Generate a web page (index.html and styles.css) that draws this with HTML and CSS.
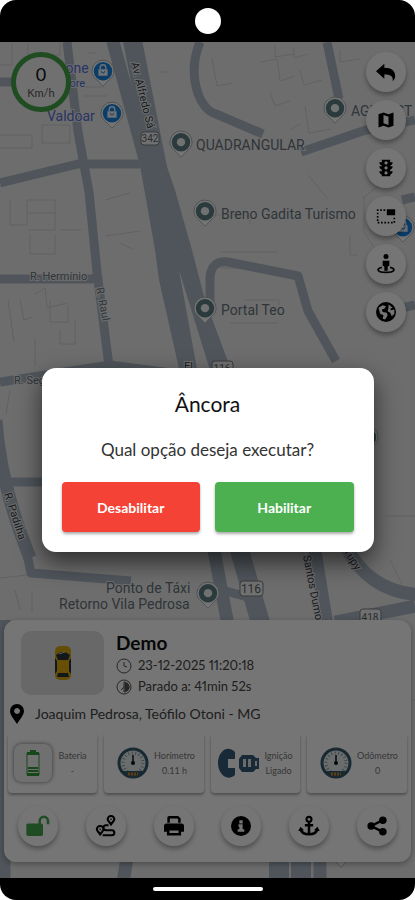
FILE: index.html
```
<!DOCTYPE html>
<html lang="pt-BR">
<head>
<meta charset="utf-8">
<meta name="viewport" content="width=device-width, initial-scale=1">
<title>Rastreamento</title>
<link rel="stylesheet" href="styles.css">
</head>
<body>
<svg class="defs" width="0" height="0" aria-hidden="true">
  <defs>
    <symbol id="pin" viewBox="0 0 26 30">
      <path d="M13 1a12 12 0 0 1 12 12c0 6-5 9-8 12-2 2-3 4-4 4s-2-2-4-4c-3-3-8-6-8-12A12 12 0 0 1 13 1z" fill="#fff" stroke="#a5adaf" stroke-width="1"/>
      <circle cx="13" cy="13" r="10" fill="#5f7f83"/><circle cx="13" cy="13" r="4.500" fill="#f4f8f8"/>
    </symbol>
    <symbol id="shop" viewBox="0 0 26 30">
      <path d="M13 1a12 12 0 0 1 12 12c0 6-5 9-8 12-2 2-3 4-4 4s-2-2-4-4c-3-3-8-6-8-12A12 12 0 0 1 13 1z" fill="#fff" stroke="#a5adaf" stroke-width="1"/>
      <circle cx="13" cy="13" r="10" fill="#1685e0"/>
      <path d="M8 11h10v7H8z" fill="#f4f8ff"/><path d="M10 11V9a3 3 0 0 1 6 0v2" fill="none" stroke="#f4f8ff" stroke-width="1.500"/><path d="M11 13a2 2 0 0 0 4 0" fill="none" stroke="#1685e0"/>
    </symbol>
    <symbol id="gauge" viewBox="0 0 32 32">
      <circle cx="16" cy="16" r="14" fill="#e8eded" stroke="#36596b" stroke-width="3"/>
      <circle cx="16" cy="16" r="10" fill="none" stroke="#8a9da4" stroke-width="3" stroke-dasharray="1 2.500"/>
      <path d="M5 24h22a14 14 0 0 1-22 0z" fill="#36596b"/>
      <path d="M16 8v8" stroke="#111" stroke-width="1.500"/><circle cx="16" cy="16" r="2" fill="#111"/>
      <path d="M11 27h10" stroke="#c68a28" stroke-width="3" stroke-dasharray="2 1"/>
    </symbol>
  </defs>
</svg>
<div class="phone">
  <header class="status"><span class="camera"></span></header>
  <main class="screen">
    <svg class="map" viewBox="0 42 415 836" preserveAspectRatio="xMidYMid slice" role="img" aria-label="Mapa">
      <rect y="42" width="415" height="836" fill="#f0eeef"/>
      <g class="blocks">
        <path d="M0 65h12v-22M28 43v12h32V43M84 96h23M80 87h24M88 53h8M0 135h32v13H0M42 125h28v18H42zM160 72h8M10 200v25h17v-25h28v30H28M27 213h28M30 234v20h25v-19M60 230h22M105 200l25-7M105 236l35-5M120 243l12 6M8 300l6 42M20 300l4 20 8-3M35 294l10-6 2 20 20-5M50 300v22h18v-17M75 320v25M35 338v28M60 330v14h16M10 390l-4 24M212 58l5 28 15-3M260 62l17-3 3 22 15-5M275 45v12l18-3M294 48v10l14-4M300 70l4 15 18-5M270 92l5 14 15-5M305 106l4 27 22-4M290 130l10-6M308 175l20 24M220 252h57M230 323h48M210 215h40v10M220 268h50M245 300h34v5M350 235v20h8M380 185l-16 12v35l20 30M340 50v12l20-3M370 70h15M385 516h30M390 560l12 24M0 689h8M15 590l5 20M32 592v20M0 578l28-3M408 700h7"/>
      </g>
      <g class="roads">
        <path class="r8" d="M67 42l11 90 11 60 8 80 12 94"/>
        <path class="r8" d="M0 82h18M0 183l78-19h62M0 279h92l9-4M0 382l52-8 58-9 92 12M0 482h45"/>
        <path class="r8" d="M200 42c-14 35 0 68 16 72l47 20M301 152l65-22 49-10"/>
        <path class="r8" d="M327 42l12 57M210 310v-32q1-18 18-16l70 14 10 35 28 50"/>
        <path class="r8" d="M402 200l13-3M402 308l13-3M24 540l7 33 100 8M222 590l36 10"/>
        <path class="r13" d="M-4 420q4 64 34 138"/>
        <path class="r13" d="M4 620v265M127 858l-4 25"/>
        <path class="r13" d="M112 38l34 125"/>
        <path class="r16" d="M132 38l26 132"/>
        <path class="area" d="M139 160l24-5 12 35 17 60 13 50 28 75-20 5-34-110 20 110-17 2-23-102-4-30z"/>
        <path class="r13" d="M213 545l15 80M314 545l13 80M345 545q25 50 82 50M335 622l80-16"/>
        <path class="r16" d="M238 545l26 90"/>
        <path class="r20" d="M279 855v25M301 855v25"/>
        <path class="r13" d="M320 855v25"/>
      </g>
      <g class="labels">
        <text class="shop" x="49" y="73">Ozone</text><text class="shop small" x="54" y="87">Valore</text><text class="shop" x="47" y="121">Valdoar</text>
        <text x="196" y="150">QUADRANGULAR</text><text x="351" y="116">AGROEST</text>
        <text x="221" y="219">Breno Gadita Turismo</text><text x="221" y="315">Portal Teo</text>
        <text x="106" y="593">Ponto de Táxi</text><text x="59" y="609">Retorno Vila Pedrosa</text>
        <text class="street" x="30" y="280">R. Hermínio</text><text class="street" x="14" y="384">R. Seg</text>
        <text class="street" transform="translate(96 288) rotate(79)">R. Raul</text>
        <text class="street dark" transform="translate(131 63) rotate(76)">Av. Alfredo Sá</text>
        <text class="street dark" transform="translate(4 494) rotate(72)">R. Padilha</text>
        <text class="street dark" transform="translate(303 556) rotate(79)">Santos Dumo</text>
        <text class="street dark" transform="translate(343 551) rotate(58)">Tupy</text>
        <text class="street dark" x="184" y="370">El</text>
      </g>
      <g class="shields">
        <rect x="141" y="132" width="18" height="13" rx="3"/><text x="150" y="142">342</text>
        <rect x="212" y="361" width="21" height="14" rx="3"/><text x="222" y="372">116</text>
        <rect x="240" y="581" width="23" height="15" rx="3"/><text class="big" x="251" y="593">116</text>
        <rect x="360" y="609" width="21" height="15" rx="3"/><text x="370" y="621">418</text>
      </g>
      <use href="#shop" x="91" y="59" width="24" height="28"/><use href="#shop" x="100" y="101" width="24" height="28"/>
      <use href="#shop" x="391" y="215" width="24" height="28"/>
      <use href="#pin" x="169" y="130" width="24" height="28"/><use href="#pin" x="323" y="96" width="24" height="28"/>
      <use href="#pin" x="193" y="199" width="24" height="28"/><use href="#pin" x="193" y="296" width="24" height="28"/>
      <use href="#pin" x="355" y="425" width="24" height="28"/><use href="#pin" x="196" y="581" width="24" height="28"/>
      <use href="#pin" x="329" y="840" width="24" height="28"/>
    </svg>

    <div class="content">
      <div class="top">
        <div class="speed"><strong>0</strong><span>Km/h</span></div>
        <nav class="tools" aria-label="Ferramentas do mapa">
          <button class="round" aria-label="Voltar"><svg viewBox="0 0 24 24"><path d="M10 2v5c9 0 13 4 13 10 0 2-1 4-3 6 1-6-3-8-10-8v5l-10-9z"/></svg></button>
          <button class="round" aria-label="Tipo de mapa"><svg viewBox="0 0 24 24"><path fill-rule="evenodd" d="M3 5l6-2 6 2 6-2v16l-6 2-6-2-6 2zm6 1v10l6 2V8z"/></svg></button>
          <button class="round" aria-label="Trânsito"><svg viewBox="0 0 24 24"><path fill-rule="evenodd" d="M7 2h10v3h3c0 2-1 3-3 4v1h3c0 2-1 3-3 4v2h3c0 2-1 3-3 4v2H7v-2c-2-1-3-2-3-4h3v-2c-2-1-3-2-3-4h3V9C5 8 4 7 4 5h3zm5 2a2 2 0 1 0 .1 0zm0 6a2 2 0 1 0 .1 0zm0 6a2 2 0 1 0 .1 0z"/></svg></button>
          <button class="round" aria-label="Área"><svg viewBox="0 0 24 24"><path d="M13 4h10v7H13z"/><path d="M11 5H2v15h20v-8" fill="none" stroke="currentColor" stroke-width="2" stroke-dasharray="2 2"/></svg></button>
          <button class="round" aria-label="Vista de rua"><svg viewBox="0 0 24 24"><circle cx="12" cy="3" r="3"/><path d="M8 8h8v6l-2 1v5h-4v-5l-2-1z"/><path d="M7 16c-8 2-5 6 5 6s13-4 5-6" fill="none" stroke="currentColor" stroke-width="2"/></svg></button>
          <button class="round" aria-label="Satélite"><svg viewBox="0 0 24 24"><circle cx="12" cy="12" r="12"/><path class="land" d="M3 7l5-3 4 1-2 3-3 1 1 3 5 1 1 3-3 5-3-1 1-4-4-2zM15 3l5 4-3 1 1 2 4-1v5l-3 3-2-4-3-2 1-4z"/></svg></button>
        </nav>
      </div>

      <section class="panel" aria-label="Veículo">
        <div class="vehicle">
          <div class="photo">
            <svg viewBox="0 0 18 36"><rect x="1" y="1" width="16" height="34" rx="5" fill="#d9a80a"/><path d="M2 10q7-6 14 0l-2 5H4zM4 28h10l1 4H3zM1 13l2 3v10l-2 3zM17 13l-2 3v10l2 3z" fill="#27333a"/><rect x="3" y="16" width="12" height="12" rx="2" fill="#e2ad0b"/><path d="M5 9l6-2" stroke="#b8c6cc"/></svg>
          </div>
          <div class="facts">
            <h1>Demo</h1>
            <p><svg viewBox="0 0 16 16"><circle cx="8" cy="8" r="7"/><path d="M8 4v4l3 1"/></svg>23-12-2025 11:20:18</p>
            <p><svg viewBox="0 0 16 16"><circle cx="8" cy="8" r="7"/><path d="M8 3a5 5 0 0 1 0 10zM8 8l-3 3"/><path d="M9 4a4 4 0 0 1 0 8z" fill="#555"/></svg>Parado a: 41min 52s</p>
          </div>
        </div>
        <p class="address"><svg viewBox="0 0 16 22"><path fill-rule="evenodd" d="M8 1a7 7 0 0 1 7 7c0 4-4 8-7 13C5 16 1 12 1 8a7 7 0 0 1 7-7zm0 4a3 3 0 1 0 .1 0z"/></svg>Joaquim Pedrosa, Teófilo Otoni - MG</p>
        <div class="sensors">
          <div class="sensor"><span class="battery"><svg viewBox="0 0 16 28"><path d="M2 4h12v22H2z" fill="none" stroke="#369b3d"/><path d="M5 1h6v2h3v3H2V3h3zM3 18h10v2H3zM3 21h10v2H3zM2 24h12v3H2z" fill="#369b3d"/></svg></span><div><b>Bateria</b><i>-</i></div></div>
          <div class="sensor"><svg class="dial"><use href="#gauge"/></svg><div><b>Horímetro</b><i>0.11 h</i></div></div>
          <div class="sensor"><svg class="key" viewBox="0 0 44 32"><path d="M18 5v7h-7v9h7v7C10 35 1 27 1 16S10-3 18 5z" fill="#355c7b"/><path d="M25 8h11l3 3h3v11h-3l-3 3H25l-3-4v-9z" fill="#355c7b"/><path d="M26 12h3v8h-3zM31 12h3v8h-3zM38 14h2v5h-2z" fill="#e8e8e8"/></svg><div><b>Ignição</b><i>Ligado</i></div></div>
          <div class="sensor"><svg class="dial"><use href="#gauge"/></svg><div><b>Odômetro</b><i>0</i></div></div>
        </div>
        <nav class="actions" aria-label="Ações">
          <button class="round green" aria-label="Desbloquear"><svg viewBox="0 0 24 24"><rect x="-2" y="9" width="20" height="15" rx="2"/><path d="M14 11V6a5 5 0 0 1 10 0v4" fill="none" stroke="currentColor" stroke-width="3"/></svg></button>
          <button class="round" aria-label="Rota"><svg viewBox="0 0 24 24"><path fill="none" stroke="currentColor" stroke-width="2.500" d="M5 22c-2-3-4-4-4-6a4 4 0 0 1 8 0c0 2-2 3-4 6zM18 10c-2-3-4-4-4-6a4 4 0 0 1 8 0c0 2-2 3-4 6zM15 11h-3a3 3 0 0 0 0 6h7a3 3 0 0 1 0 6H8"/><circle cx="5" cy="16" r="1"/><circle cx="18" cy="4" r="1"/></svg></button>
          <button class="round" aria-label="Imprimir"><svg viewBox="0 0 24 24"><path d="M4 8V2q0-2 2-2h11l3 3v5h-3V4l-1-1H7v5zM3 9h18q3 0 3 3v7h-4v-3H4v3H0v-7q0-3 3-3z"/><path d="M5 16h14v6H5z" fill="none" stroke="currentColor" stroke-width="3"/></svg></button>
          <button class="round" aria-label="Informações"><svg viewBox="0 0 24 24"><circle cx="12" cy="12" r="12"/><path class="land" d="M10 5h4v4h-4zM9 10h5v6h2v3H8v-3h2v-3H9z"/></svg></button>
          <button class="round" aria-label="Âncora"><svg viewBox="0 0 24 24"><path fill="none" stroke="currentColor" stroke-width="3" d="M12 7v15M7 11h10M2 16c1 4 4 6 10 6s9-2 10-6"/><circle cx="12" cy="4" r="3" fill="none" stroke="currentColor" stroke-width="2.500"/><path d="M-1 18l3-5 4 4zM25 18l-3-5-4 4z"/></svg></button>
          <button class="round" aria-label="Compartilhar"><svg viewBox="0 0 24 24"><path d="M19 5L5 12l14 7" fill="none" stroke="currentColor" stroke-width="3"/><circle cx="19" cy="5" r="4.500"/><circle cx="5" cy="12" r="4.500"/><circle cx="19" cy="19" r="4.500"/></svg></button>
        </nav>
      </section>
    </div>

    <div class="scrim">
      <div class="dialog" role="dialog" aria-modal="true" aria-labelledby="title">
        <h2 id="title">Âncora</h2>
        <p>Qual opção deseja executar?</p>
        <div class="choices"><button class="off">Desabilitar</button><button class="on">Habilitar</button></div>
      </div>
    </div>
  </main>
  <footer class="home"><span></span></footer>
</div>
</body>
</html>
```
FILE: styles.css
```
* { box-sizing: border-box; }
body { margin: 0; background: #fff; font-family: Lato, "Open Sans", sans-serif; color: #111; }
h1, h2, p { margin: 0; font-weight: 400; }
button { border: 0; padding: 0; font: inherit; }
.defs { position: absolute; }
.phone { min-height: 100vh; display: flex; flex-direction: column; background: #000; border-radius: 16px; overflow: hidden; }
.status { height: 42px; display: flex; justify-content: center; align-items: center; }
.camera { width: 26px; height: 26px; border-radius: 50%; background: #fff; }
.screen { flex: 1; position: relative; display: flex; overflow: hidden; }
.map { position: absolute; inset: 0; width: 100%; height: 100%; }
.content { flex: 1; position: relative; display: flex; flex-direction: column; justify-content: space-between; padding: 10px 4px 16px; }

.blocks { fill: none; stroke: #d5d3d5; stroke-width: 1; }
.roads { fill: none; stroke: #adbac6; stroke-linejoin: round; }
.roads .area { fill: #adbac6; stroke: none; }
.r8 { stroke-width: 9; }
.r13 { stroke-width: 13; }
.r16 { stroke-width: 19; }
.r20 { stroke-width: 20; }
.labels { font: 14px Roboto, sans-serif; fill: #66757b; stroke: #f0eeef; stroke-width: 2; paint-order: stroke; }
.labels .shop { fill: #5573d8; }
.labels .small { font-size: 11px; }
.labels .street { font-size: 11px; }
.labels .dark { fill: #333e48; }
.shields { font: 10px Roboto, sans-serif; text-anchor: middle; }
.shields rect { fill: #f5f5f5; stroke: #7b8286; }
.shields text { fill: #5d676c; }
.shields .big { font-size: 12px; }

.top { display: flex; justify-content: space-between; align-items: flex-start; padding: 0 5px 0 7px; }
.speed { width: 60px; height: 60px; border: 5px solid #44a648; border-radius: 50%; background: #f4f4f4; display: flex; flex-direction: column; align-items: center; justify-content: center; gap: 2px; }
.speed strong { font-size: 18px; line-height: 20px; font-weight: 400; }
.speed span { font-size: 11px; line-height: 14px; color: #555; }
.tools { display: flex; flex-direction: column; gap: 8px; }
.round { width: 40px; height: 40px; border-radius: 50%; background: #fff; color: #000; display: grid; place-items: center; box-shadow: 0 3px 5px #0005; }
.round svg { width: 20px; height: 20px; fill: currentColor; overflow: visible; }
.round .land { fill: #fff; }
.round.green { color: #44a64a; }

.panel { background: #fff; border-radius: 12px; box-shadow: 0 2px 6px #0005; padding: 11px 4px 16px 4px; }
.vehicle { display: flex; gap: 12px; padding-left: 13px; }
.photo { width: 83px; height: 64px; border-radius: 10px; background: #e2e2e2; display: grid; place-items: center; }
.photo svg { width: 18px; height: 36px; }
.facts h1 { font-size: 19px; line-height: 24px; font-weight: 700; }
.facts p { display: flex; align-items: center; gap: 6px; font-size: 13px; line-height: 21px; color: #444; font-variant-numeric: proportional-nums; }
.facts svg { width: 16px; height: 16px; fill: none; stroke: #555; }
.address { display: flex; align-items: center; gap: 10px; font-size: 14px; line-height: 22px; margin-top: 6px; padding-left: 1px; color: #444; }
.address svg { width: 16px; height: 22px; fill: #000; }
.sensors { display: grid; grid-template-columns: 89px 1fr 89px 1fr; gap: 7px; margin-top: 8px; }
.sensor { height: 60px; border-radius: 4px; background: #fff; box-shadow: 0 2px 3px #0005; display: flex; align-items: center; justify-content: space-between; padding: 0 4px 0 6px; }
.sensor > div { flex: 1; text-align: center; }
.sensor b, .sensor i { display: block; font-style: normal; font-weight: 400; font-size: 9px; line-height: 15px; color: #777; }
.dial { width: 32px; height: 32px; margin-left: 7px; }
.key { width: 44px; height: 32px; }
.battery { width: 38px; height: 38px; border-radius: 8px; background: #f3f3f3; box-shadow: 0 0 4px #0008; display: grid; place-items: center; }
.battery svg { width: 16px; height: 28px; }
.actions { display: flex; justify-content: space-between; padding: 13px 10px 0; }

.scrim { position: absolute; inset: 0; display: flex; align-items: center; justify-content: center; background: rgba(0, 0, 0, .54); }
.dialog { width: 80%; border-radius: 14px; background: #fff; box-shadow: 0 10px 24px #0009; padding: 20px; text-align: center; }
.dialog h2 { font-size: 21px; line-height: 32px; color: #111; }
.dialog p { font-size: 17px; line-height: 24px; margin-top: 18px; color: #333; }
.choices { display: grid; grid-template-columns: 1fr 1fr; gap: 15px; margin-top: 20px; }
.choices button { height: 50px; border-radius: 4px; color: #fff; font-size: 14px; font-weight: 700; box-shadow: 0 2px 3px #0005; }
.off { background: #f44336; }
.on { background: #4caf50; }
.home { height: 22px; display: flex; align-items: center; justify-content: center; }
.home span { width: 110px; height: 4px; border-radius: 2px; background: #fff; }
```
